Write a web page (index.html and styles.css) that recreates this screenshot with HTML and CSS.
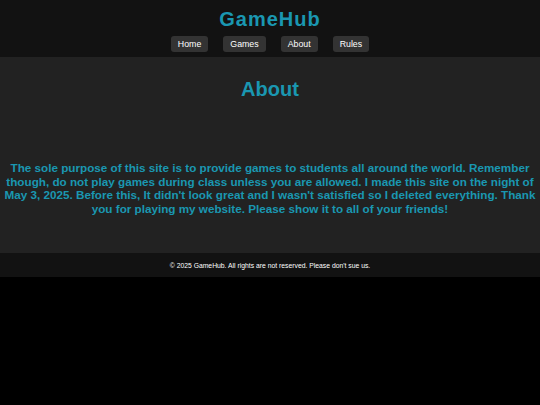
FILE: index.html
```html
<!DOCTYPE html>
<html lang="en">
<head>
<meta charset="utf-8">
<title>GameHub - About</title>
<link rel="stylesheet" href="styles.css">
</head>
<body>
<header class="site-header">
  <h1 class="logo">GameHub</h1>
  <nav class="nav">
    <a class="nav-btn" href="#">Home</a>
    <a class="nav-btn" href="#">Games</a>
    <a class="nav-btn" href="#">About</a>
    <a class="nav-btn" href="#">Rules</a>
  </nav>
</header>
<main class="content">
  <h2 class="title">About</h2>
  <p class="text">The sole purpose of this site is to provide games to students all around the world. Remember though, do not play games during class unless you are allowed. I made this site on the night of May 3, 2025. Before this, It didn't look great and I wasn't satisfied so I deleted everything. Thank you for playing my website. Please show it to all of your friends!</p>
</main>
<footer class="site-footer">
  <p class="copy">© 2025 GameHub. All rights are not reserved. Please don't sue us.</p>
</footer>
</body>
</html>
```
FILE: styles.css
```css
html, body {
  margin: 0;
  padding: 0;
  background: #000;
  font-family: "Liberation Sans", Arial, sans-serif;
}
.site-header {
  background: #121212;
  height: 57px;
  box-sizing: border-box;
  padding-top: 8px;
  display: flex;
  flex-direction: column;
  align-items: center;
}
.logo {
  margin: 0;
  font-size: 20px;
  line-height: 23px;
  letter-spacing: 1px;
  color: #1a97b1;
  font-weight: bold;
}
.nav {
  display: flex;
  gap: 15px;
  margin-top: 5px;
}
.nav-btn {
  display: block;
  background: #333;
  color: #fff;
  text-decoration: none;
  font-size: 8.8px;
  line-height: 10px;
  padding: 3px 7px;
  border-radius: 3px;
}
.content {
  background: #222;
  height: 196px;
  box-sizing: border-box;
  padding: 0 2px;
  text-align: center;
  color: #1a97b1;
}
.title {
  margin: 0;
  padding-top: 21px;
  font-size: 20px;
  line-height: 23px;
  font-weight: bold;
}
.text {
  margin: 60px 0 0;
  font-size: 11.7px;
  line-height: 13.7px;
  font-weight: bold;
}
.site-footer {
  background: #121212;
  height: 24px;
  display: flex;
  align-items: center;
  justify-content: center;
}
.copy {
  margin: 0;
  color: #fff;
  font-size: 6.8px;
}
```
